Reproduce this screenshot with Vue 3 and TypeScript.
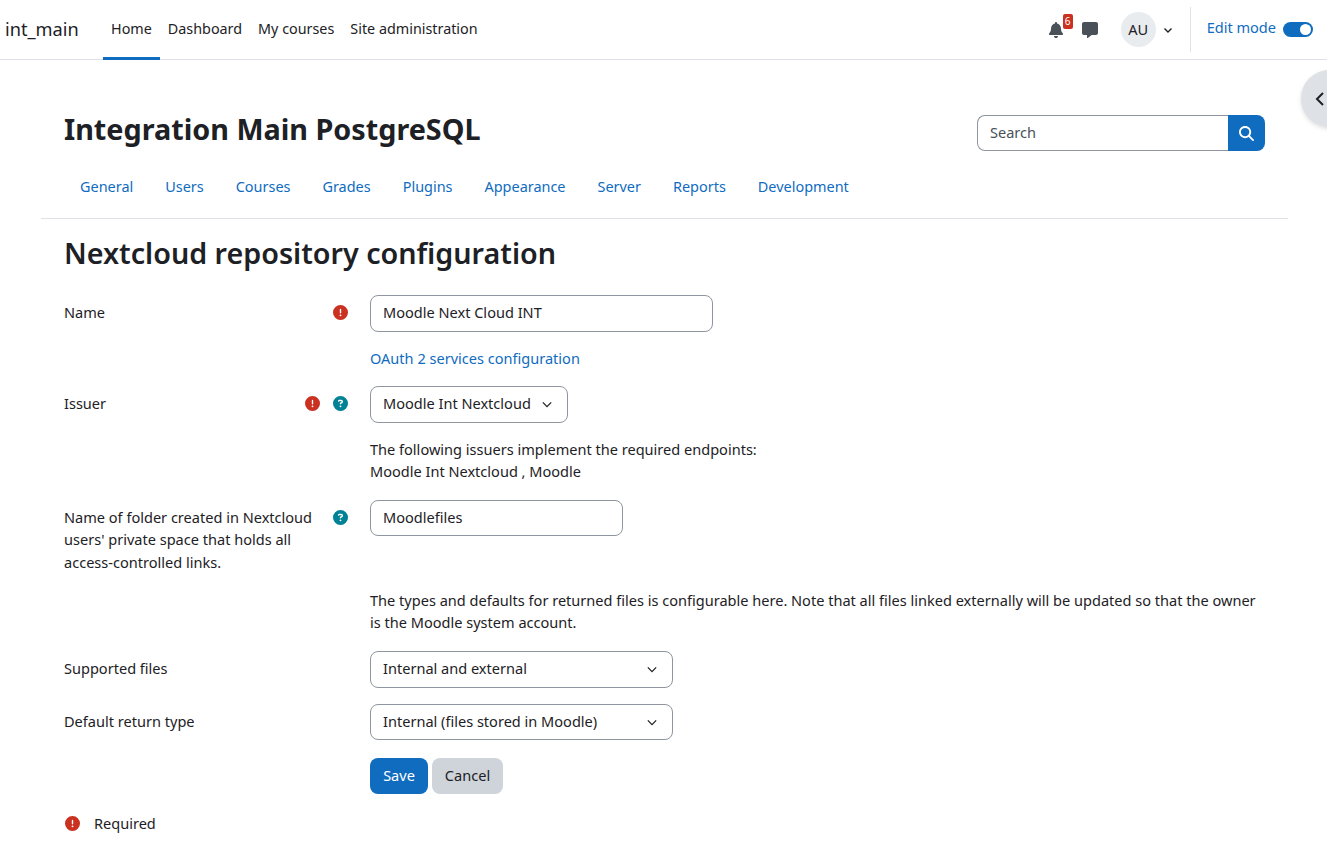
<script setup lang="ts">
const primaryNav: string[] = ['Home', 'Dashboard', 'My courses', 'Site administration']
const secondaryNav: string[] = ['General', 'Users', 'Courses', 'Grades', 'Plugins', 'Appearance', 'Server', 'Reports', 'Development']
const exclaim = 'M256 512A256 256 0 1 0 256 0a256 256 0 1 0 0 512zm0-384c13.3 0 24 10.7 24 24V264c0 13.3-10.7 24-24 24s-24-10.7-24-24V152c0-13.3 10.7-24 24-24zM224 352a32 32 0 1 1 64 0 32 32 0 1 1 -64 0z'
const question = 'M256 512A256 256 0 1 0 256 0a256 256 0 1 0 0 512zM169.8 165.3c7.9-22.3 29.1-37.3 52.8-37.3h58.3c34.9 0 63.1 28.3 63.1 63.1c0 22.6-12.1 43.5-31.7 54.8L280 264.4c-.2 13-10.9 23.6-24 23.6c-13.3 0-24-10.7-24-24V250.5c0-8.6 4.6-16.5 12.1-20.8l44.3-25.4c4.7-2.7 7.6-7.7 7.6-13.1c0-8.4-6.8-15.1-15.1-15.1H222.6c-3.4 0-6.4 2.1-7.5 5.3l-.4 1.2c-4.4 12.5-18.2 19-30.6 14.6s-19-18.2-14.6-30.6l.4-1.2zM224 352a32 32 0 1 1 64 0 32 32 0 1 1 -64 0z'
</script>

<template>
  <div class="page">
    <header class="navbar">
      <span class="brand">int_main</span>
      <nav class="primary">
        <a v-for="(item, i) in primaryNav" :key="item" class="tab" :class="{ active: i === 0 }">{{ item }}</a>
      </nav>
      <div class="usernav">
        <span class="bell">
          <svg class="bell-icon" viewBox="0 0 448 512"><path fill="#495057" d="M224 0c-17.7 0-32 14.3-32 32V51.2C119 66 64 130.6 64 208v18.8c0 47-17.3 92.4-48.5 127.6l-7.4 8.3c-8.4 9.4-10.4 22.9-5.3 34.4S19.4 416 32 416H416c12.6 0 24-7.4 29.2-18.9s3.1-25-5.3-34.4l-7.4-8.3C401.3 319.2 384 273.9 384 226.8V208c0-77.4-55-142-128-156.8V32c0-17.7-14.3-32-32-32zm45.3 493.3c12-12 18.7-28.3 18.7-45.3H224 160c0 17 6.7 33.3 18.7 45.3s28.3 18.7 45.3 18.7s33.3-6.7 45.3-18.7z"/></svg>
          <span class="count">6</span>
        </span>
        <svg class="msg-icon" viewBox="0 0 512 512"><path fill="#495057" d="M64 0C28.7 0 0 28.7 0 64V352c0 35.3 28.7 64 64 64h96v80c0 6.1 3.4 11.6 8.8 14.3s11.9 2.1 16.8-1.5L309.3 416H448c35.3 0 64-28.7 64-64V64c0-35.3-28.7-64-64-64H64z"/></svg>
        <span class="avatar">AU</span>
        <svg class="caret-small" viewBox="0 0 12 12"><path d="M2.5 4.5 6 8l3.5-3.5" fill="none" stroke="#1d2125" stroke-width="1.4"/></svg>
        <span class="divider"></span>
        <span class="edit-label">Edit mode</span>
        <span class="toggle"><span class="knob"></span></span>
      </div>
    </header>

    <button class="drawer-toggle" type="button" aria-label="Open drawer">
      <svg viewBox="0 0 12 16" width="12" height="16"><path d="M9 2 3 8l6 6" fill="none" stroke="#1d2125" stroke-width="2"/></svg>
    </button>

    <div class="head">
      <div class="title-row">
        <h1>Integration Main PostgreSQL</h1>
        <div class="search">
          <span class="search-input">Search</span>
          <span class="search-btn">
            <svg viewBox="0 0 512 512" width="15" height="15"><path fill="#fff" d="M416 208c0 45.9-14.9 88.3-40 122.7L502.6 457.4c12.5 12.5 12.5 32.8 0 45.3s-32.8 12.5-45.3 0L330.7 376c-34.4 25.2-76.8 40-122.7 40C93.1 416 0 322.9 0 208S93.1 0 208 0S416 93.1 416 208zM208 352a144 144 0 1 0 0-288 144 144 0 1 0 0 288z"/></svg>
          </span>
        </div>
      </div>
      <nav class="secondary">
        <a v-for="item in secondaryNav" :key="item">{{ item }}</a>
      </nav>
    </div>

    <main class="content">
      <h2>Nextcloud repository configuration</h2>

      <div class="row row-name">
        <div class="label"><span>Name</span><span class="icons"><svg class="ic" viewBox="0 0 512 512"><path fill="#ca3120" :d="exclaim"/></svg></span></div>
        <div class="field"><div class="control w-name">Moodle Next Cloud INT</div></div>
      </div>

      <div class="row row-link">
        <div class="label"></div>
        <div class="field"><a class="link">OAuth 2 services configuration</a></div>
      </div>

      <div class="row row-issuer">
        <div class="label"><span>Issuer</span><span class="icons"><svg class="ic" viewBox="0 0 512 512"><path fill="#ca3120" :d="exclaim"/></svg><svg class="ic" viewBox="0 0 512 512"><path fill="#008196" :d="question"/></svg></span></div>
        <div class="field">
          <div class="control select w-issuer">Moodle Int Nextcloud<svg class="chev" viewBox="0 0 12 8"><path d="M1 1.5 6 6.5l5-5" fill="none" stroke="#1d2125" stroke-width="1.5"/></svg></div>
          <p class="note">The following issuers implement the required endpoints:<br>Moodle Int Nextcloud , Moodle</p>
        </div>
      </div>

      <div class="row row-folder">
        <div class="label"><span class="wrap">Name of folder created in Nextcloud users' private space that holds all access-controlled links.</span><span class="icons"><svg class="ic" viewBox="0 0 512 512"><path fill="#008196" :d="question"/></svg></span></div>
        <div class="field"><div class="control w-folder">Moodlefiles</div></div>
      </div>

      <div class="row row-text">
        <div class="label"></div>
        <div class="field"><p class="note">The types and defaults for returned files is configurable here. Note that all files linked externally will be updated so that the owner is the Moodle system account.</p></div>
      </div>

      <div class="row row-supported">
        <div class="label"><span>Supported files</span></div>
        <div class="field"><div class="control select w-select">Internal and external<svg class="chev" viewBox="0 0 12 8"><path d="M1 1.5 6 6.5l5-5" fill="none" stroke="#1d2125" stroke-width="1.5"/></svg></div></div>
      </div>

      <div class="row row-default">
        <div class="label"><span>Default return type</span></div>
        <div class="field"><div class="control select w-select">Internal (files stored in Moodle)<svg class="chev" viewBox="0 0 12 8"><path d="M1 1.5 6 6.5l5-5" fill="none" stroke="#1d2125" stroke-width="1.5"/></svg></div></div>
      </div>

      <div class="row row-buttons">
        <div class="label"></div>
        <div class="field buttons">
          <button class="btn save" type="button">Save</button>
          <button class="btn cancel" type="button">Cancel</button>
        </div>
      </div>

      <div class="required">
        <svg class="ic" viewBox="0 0 512 512"><path fill="#ca3120" :d="exclaim"/></svg>
        <span class="required-text">Required</span>
      </div>
    </main>
  </div>
</template>

<style>
html, body { margin: 0; background: #fff; }
</style>

<style scoped>
.page {
  position: relative;
  height: 851px;
  overflow: hidden;
  font-family: "Noto Sans", sans-serif;
  font-size: 14.55px;
  line-height: 22.5px;
  color: #1d2125;
  background: #fff;
}
.navbar {
  box-sizing: border-box;
  height: 60px;
  display: flex;
  align-items: stretch;
  padding-left: 5px;
  border-bottom: 1px solid #dee2e6;
}
.brand { align-self: center; font-size: 18.2px; width: 98px; }
.primary { display: flex; font-size: 14.35px; }
.tab {
  display: flex;
  align-items: center;
  padding: 2px 8px 0;
  margin-bottom: -1px;
  border-bottom: 3px solid transparent;
  box-sizing: border-box;
}
.tab.active { border-bottom-color: #0f6cbf; }
.usernav {
  margin-left: auto;
  display: flex;
  align-items: center;
  padding-right: 14px;
}
.bell { position: relative; display: flex; width: 14px; height: 16px; }
.bell-icon { width: 14px; height: 16px; }
.count {
  position: absolute;
  left: 14px;
  top: -8px;
  width: 10px;
  height: 15px;
  background: #ca3120;
  color: #fff;
  font-size: 10px;
  line-height: 15px;
  text-align: center;
  border-radius: 2px;
}
.msg-icon { width: 16px; height: 16px; margin-left: 19px; }
.avatar {
  width: 35px;
  height: 35px;
  margin-left: 23px;
  border-radius: 50%;
  background: #e9ecef;
  display: flex;
  align-items: center;
  justify-content: center;
}
.caret-small { width: 12px; height: 12px; margin-left: 6px; }
.divider { width: 1px; height: 45px; background: #dee2e6; margin: 0 16px; }
.edit-label { color: #0f6cbf; margin-top: -4px; }
.toggle {
  width: 30px;
  height: 15px;
  margin-left: 7px;
  border-radius: 8px;
  background: #0f6cbf;
  position: relative;
}
.knob {
  position: absolute;
  right: 2px;
  top: 2px;
  width: 11px;
  height: 11px;
  border-radius: 50%;
  background: #fff;
}
.drawer-toggle {
  position: absolute;
  left: 1301px;
  top: 70px;
  width: 57px;
  height: 57px;
  padding: 0 0 0 13px;
  border: 0;
  border-radius: 50%;
  background: #dee2e6;
  box-shadow: 0 2px 4px rgba(0, 0, 0, .12);
  display: flex;
  align-items: center;
}
.head { margin: 0 39px 0 41px; padding: 0 23px; border-bottom: 1px solid #dee2e6; height: 159px; box-sizing: border-box; }
.title-row {
  display: flex;
  align-items: center;
  justify-content: space-between;
  padding-top: 55px;
  height: 36px;
  box-sizing: content-box;
}
h1 { margin: 0 0 9px; font-size: 28.75px; font-weight: 700; line-height: 36px; }
.search { display: flex; width: 288px; height: 36px; }
.search-input {
  flex: 1;
  box-sizing: border-box;
  border: 1px solid #8f959e;
  border-right: 0;
  border-radius: 8px 0 0 8px;
  padding-left: 12px;
  line-height: 32px;
  color: #495057;
}
.search-btn {
  width: 37px;
  background: #0f6cbf;
  border-radius: 0 8px 8px 0;
  display: flex;
  align-items: center;
  justify-content: center;
}
.secondary { display: flex; gap: 32px; padding: 25px 0 0 16px; font-size: 14.45px; }
.secondary a { color: #0f6cbf; }
.content { padding: 0 62px 0 64px; }
h2 { margin: 16px 0 24px; font-size: 28.7px; font-weight: 600; line-height: 36px; }
.row { display: flex; }
.label {
  width: 306px;
  flex: none;
  display: flex;
  justify-content: space-between;
  box-sizing: border-box;
  padding: 5.6px 22px 0 0;
}
.wrap { width: 250px; }
.icons { display: flex; gap: 13px; padding-top: 4.4px; height: 15px; }
.ic { width: 15px; height: 15px; flex: none; }
.field { flex: 1; min-width: 0; }
.control {
  box-sizing: border-box;
  height: 37px;
  border: 1px solid #8f959e;
  border-radius: 8px;
  padding: 0 12px;
  line-height: 33px;
  background: #fff;
}
.select { display: flex; justify-content: space-between; align-items: center; padding: 0 15px 2px 12px; }
.chev { width: 10px; height: 7px; margin-top: 2px; }
.w-name { width: 343px; }
.w-issuer { width: 198px; }
.w-folder { width: 253px; height: 36px; line-height: 32px; }
.w-select { width: 303px; }
.row-default .control { height: 36px; padding-bottom: 1px; }
.note { margin: 0; line-height: 22.5px; }
.link { color: #0f6cbf; position: relative; top: -1px; }
.row-name { height: 37px; }
.row-link { margin-top: 16px; height: 38px; }
.row-issuer { height: 114px; }
.row-issuer .note { margin-top: 14.6px; }
.row-folder { height: 79px; }
.row-text { margin-top: 11px; height: 61px; }
.row-text .note { margin-top: -1.1px; }
.row-supported { height: 53px; }
.row-default { height: 54px; }
.row-buttons { height: 36px; }
.buttons { display: flex; gap: 4px; }
.btn {
  height: 36px;
  border: 0;
  border-radius: 8px;
  padding: 0 0 2px;
  font: inherit;
}
.save { background: #0f6cbf; color: #fff; width: 58px; }
.cancel { background: #ced4da; color: #1d2125; width: 71px; }
.required { display: flex; align-items: center; gap: 14px; margin-top: 18px; padding-left: 1px; }
</style>
